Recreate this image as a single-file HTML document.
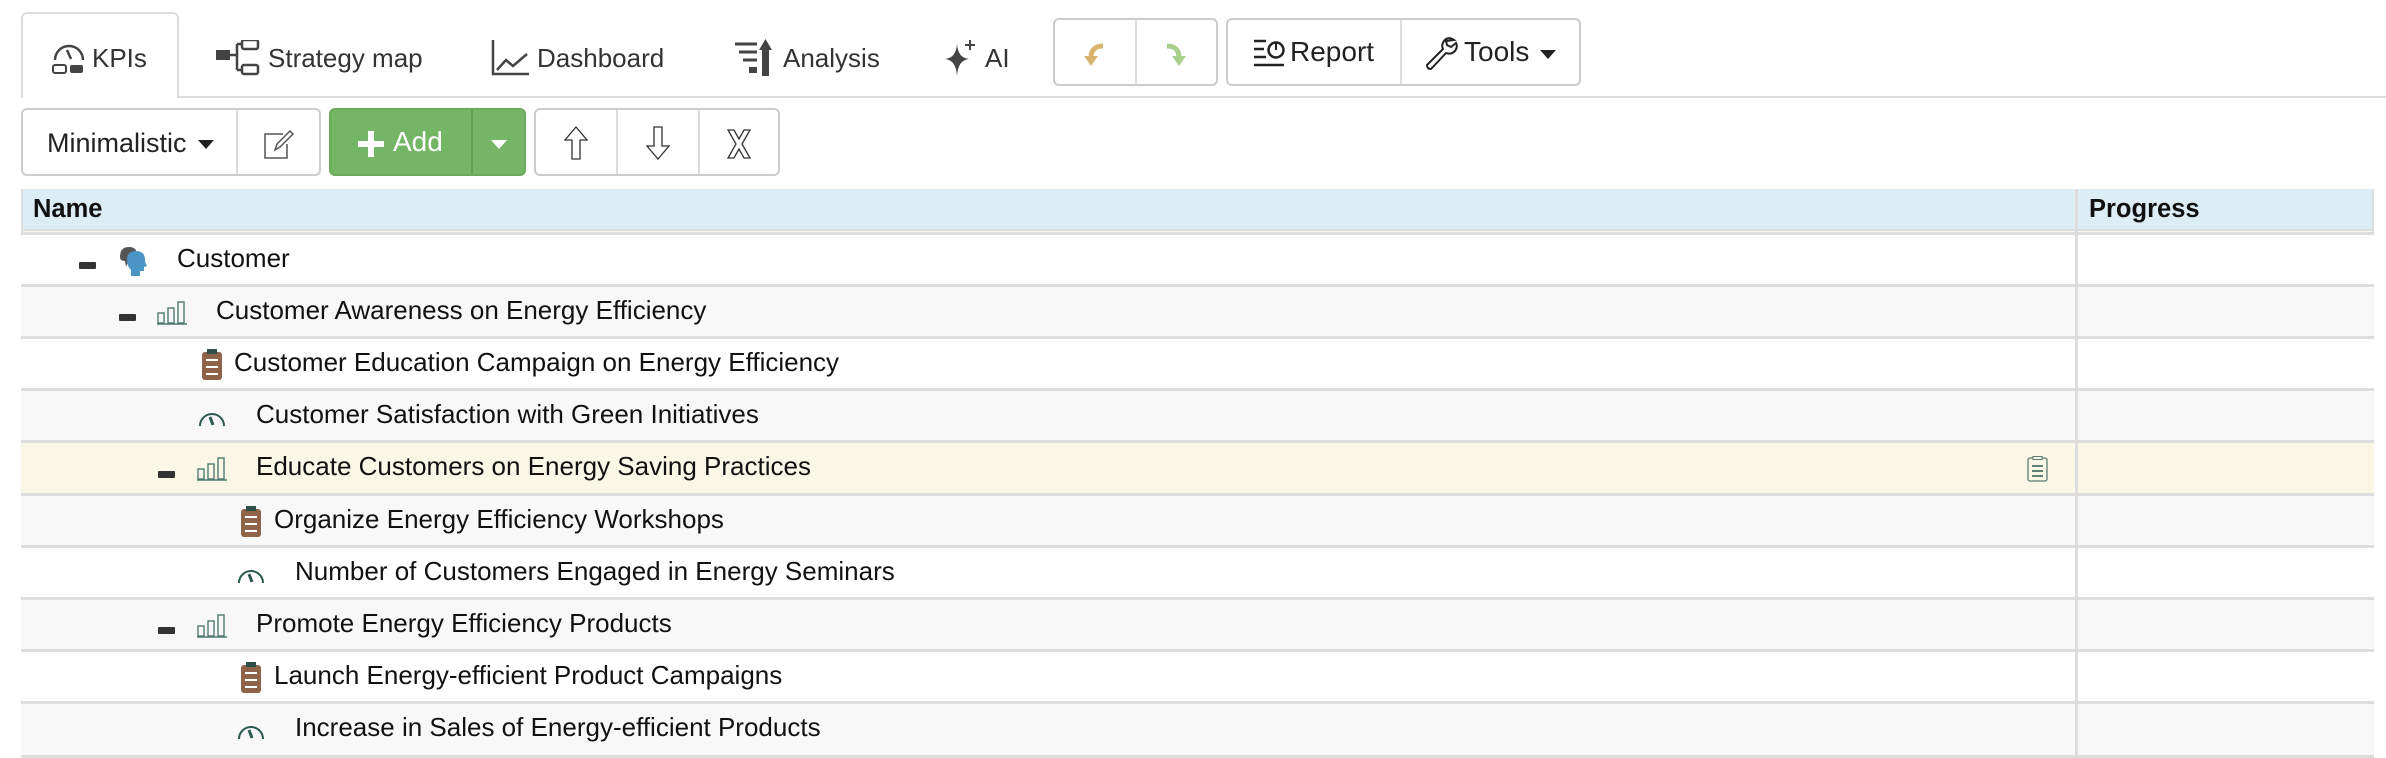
<!DOCTYPE html>
<html><head><meta charset="utf-8"><style>
*{box-sizing:border-box;margin:0;padding:0}
body{width:2386px;height:758px;background:#fff;font-family:"Liberation Sans",Arial,sans-serif;color:#111;position:relative;overflow:hidden}
.a{position:absolute}
.tab{position:absolute;top:12px;height:86px;font-size:26px;color:#333;display:flex;align-items:center;padding-top:6px}
.tab svg{margin-right:4px}
.btn{position:absolute;border:2px solid #ccc;border-radius:6px;background:#fff}
.div{position:absolute;top:0;bottom:0;width:2px;background:#ddd}
.row{position:absolute;left:21px;width:2353px;border-top:3px solid #ddd;font-size:26px}
.row span.t{position:absolute;top:50%;transform:translateY(-58%)}
.ic{position:absolute;top:50%;transform:translateY(-50%)}
.minus{position:absolute;width:17px;height:7px;background:#333;border-radius:1px}
</style></head><body>
<div class="a" style="left:21px;top:96px;width:2365px;height:2px;background:#ddd"></div>
<div class="a" style="left:21px;top:12px;width:158px;height:86px;border:2px solid #ddd;border-bottom:none;border-radius:6px 6px 0 0;background:#fff"></div>
<div class="tab" style="left:50px">
<svg width="38" height="36" viewBox="0 0 38 36"><path d="M5 20 A14 14 0 1 1 33 20" fill="none" stroke="#444" stroke-width="2.5"/><path d="M17 10 L21 19" stroke="#444" stroke-width="2.5"/><rect x="3" y="25" width="13" height="8" rx="2" fill="none" stroke="#444" stroke-width="2"/><rect x="20" y="25" width="13" height="8" rx="2" fill="#444"/></svg>KPIs</div>
<div class="tab" style="left:214px">
<svg width="50" height="36" viewBox="0 0 50 36"><rect x="2" y="10" width="14" height="10" fill="#444"/><path d="M16 15 H23 M23 4 V30 M23 4 H28 M23 30 H28" stroke="#444" stroke-width="2.5" fill="none"/><rect x="28" y="0" width="16" height="9" rx="2" fill="none" stroke="#444" stroke-width="2.5"/><rect x="28" y="25" width="16" height="9" rx="2" fill="none" stroke="#444" stroke-width="2.5"/></svg>Strategy map</div>
<div class="tab" style="left:491px">
<svg width="42" height="40" viewBox="0 0 42 40"><path d="M2 2 V36 H38" stroke="#444" stroke-width="2.5" fill="none"/><path d="M6 32 L15 22 L22 28 L36 16" stroke="#444" stroke-width="2.5" fill="none"/></svg>Dashboard</div>
<div class="tab" style="left:733px">
<svg width="46" height="40" viewBox="0 0 46 40"><path d="M2 6 H24 M6 14 H24 M10 22 H24" stroke="#444" stroke-width="3"/><rect x="16" y="29" width="8" height="6" fill="#444"/><rect x="29" y="10" width="7" height="28" fill="#444"/><path d="M26 12 L32.5 1 L39 12Z" fill="#444"/></svg>Analysis</div>
<div class="tab" style="left:943px">
<svg width="38" height="40" viewBox="0 0 38 40"><path d="M14 6 Q15 20 26 21 Q15 22 14 38 Q13 22 2 21 Q13 20 14 6Z" fill="#444"/><path d="M27 2 V12 M22 7 H32" stroke="#444" stroke-width="2"/></svg>AI</div>
<div class="btn" style="left:1053px;top:18px;width:165px;height:68px"><div class="div" style="left:80px"></div>
<svg class="a" style="left:28px;top:20px" width="26" height="28" viewBox="0 0 26 28"><path d="M20 6 Q8 6 8 18" fill="none" stroke="#d9b46e" stroke-width="5"/><path d="M1 16 L15 16 L8 26Z" fill="#d9b46e"/></svg>
<svg class="a" style="left:108px;top:20px" width="26" height="28" viewBox="0 0 26 28"><path d="M4 6 Q16 6 16 18" fill="none" stroke="#a9cf8d" stroke-width="5"/><path d="M9 16 L23 16 L16 26Z" fill="#a9cf8d"/></svg>
</div>
<div class="btn" style="left:1226px;top:18px;width:355px;height:68px;font-size:28px;color:#222"><div class="div" style="left:172px"></div>
<svg class="a" style="left:24px;top:18px" width="34" height="30" viewBox="0 0 34 30"><path d="M2 3 H14 M2 11 H12 M2 19 H14 M2 27 H32" stroke="#222" stroke-width="2.5"/><circle cx="24" cy="12" r="7.5" fill="none" stroke="#222" stroke-width="2.5"/><path d="M24 12 V4" stroke="#222" stroke-width="2"/></svg>
<span class="a" style="left:62px;top:16px">Report</span>
<svg class="a" style="left:196px;top:16px" width="34" height="36" viewBox="0 0 34 36"><path d="M30 4 Q24 0 20 5 Q17 9 19 13 L3 29 Q3 33 7 33 L22 17 Q27 19 31 15 Q34 11 32 7 L27 11 L23 9 L22 5Z" fill="none" stroke="#222" stroke-width="2"/></svg>
<span class="a" style="left:236px;top:16px">Tools</span>
<svg class="a" style="left:312px;top:30px" width="16" height="10"><path d="M0 0H16L8 9Z" fill="#222"/></svg>
</div>
<div class="btn" style="left:21px;top:108px;width:300px;height:68px;font-size:27px;color:#222"><div class="div" style="left:213px"></div>
<span class="a" style="left:24px;top:18px">Minimalistic</span>
<svg class="a" style="left:175px;top:30px" width="16" height="10"><path d="M0 0H16L8 9Z" fill="#222"/></svg>
<svg class="a" style="left:240px;top:20px" width="32" height="30" viewBox="0 0 32 30"><path d="M20 4 H2 V28 H24 V14" fill="none" stroke="#555" stroke-width="1.5"/><path d="M12 20 L14 14 L27 1 L30 4 L17 17Z" fill="none" stroke="#555" stroke-width="1.5"/></svg>
</div>
<div class="a" style="left:329px;top:108px;width:197px;height:68px;background:#75b666;border:2px solid #6aaa5b;border-radius:6px;color:#fff;font-size:28px">
<div class="a" style="left:140px;top:0;bottom:0;width:2px;background:#66a058"></div>
<svg class="a" style="left:25px;top:19px" width="30" height="30"><path d="M15 2V28M2 15H28" stroke="#fff" stroke-width="6"/></svg>
<span class="a" style="left:62px;top:16px">Add</span>
<svg class="a" style="left:160px;top:30px" width="16" height="10"><path d="M0 0H16L8 9Z" fill="#fff"/></svg>
</div>
<div class="btn" style="left:534px;top:108px;width:246px;height:68px"><div class="div" style="left:80px"></div><div class="div" style="left:162px"></div>
<svg class="a" style="left:28px;top:16px" width="24" height="34" viewBox="0 0 24 34"><path d="M12 1 L23 14 H16 V33 H8 V14 H1Z" fill="none" stroke="#333" stroke-width="1.3"/></svg>
<svg class="a" style="left:110px;top:16px" width="24" height="34" viewBox="0 0 24 34"><path d="M12 33 L23 20 H16 V1 H8 V20 H1Z" fill="none" stroke="#333" stroke-width="1.3"/></svg>
<svg class="a" style="left:190px;top:18px" width="26" height="32" viewBox="0 0 26 32"><path d="M2 2 H8 L13 11 L18 2 H24 L16 16 L24 30 H18 L13 21 L8 30 H2 L10 16Z" fill="none" stroke="#333" stroke-width="1.3"/></svg>
</div>
<div class="a" style="left:21px;top:189px;width:2353px;height:40px;background:#ddedf5;font-weight:bold;font-size:25.5px">
<span class="a" style="left:12px;top:6px">Name</span><span class="a" style="left:2068px;top:6px">Progress</span>
<div class="a" style="left:2054px;top:0;bottom:0;width:3px;background:#ddd"></div></div>
<div class="a" style="left:21px;top:229px;width:2353px;height:5px;background:#f5f5f5;border-top:2px solid #ddd"></div>
<div class="a" style="left:21px;top:189px;width:2px;height:569px;background:#ddd"></div>
<div class="a" style="left:2372px;top:189px;width:2px;height:569px;background:#ddd"></div>

<div class="row" style="top:232px;height:54px;background:#fff"><div class="minus" style="left:58px;top:27px"></div>
<svg class="ic" style="left:96px" width="34" height="32" viewBox="0 0 34 32"><path d="M3 12 Q3 2 12 2 Q20 2 20 10 L13 12 L9 22 L8 16 Q3 16 3 12Z" fill="#555"/><path d="M10 15 Q10 6 19 6 Q28 6 28 15 Q28 18 30 21 L27 22 L27 26 L23 26 L23 31 L14 31 L14 25 Q10 21 10 15Z" fill="#4a95c6"/></svg>
<span class="t" style="left:156px">Customer</span></div>
<div class="row" style="top:284px;height:54px;background:#f8f8f8"><div class="minus" style="left:98px;top:27px"></div>
<svg class="ic" style="left:136px" width="32" height="24" viewBox="0 0 32 24"><rect x="1" y="12" width="6" height="10" fill="none" stroke="#4f7a70" stroke-width="1.4"/><rect x="11" y="7" width="6" height="15" fill="none" stroke="#4f7a70" stroke-width="1.4"/><rect x="21" y="1" width="6" height="21" fill="none" stroke="#4f7a70" stroke-width="1.4"/><path d="M0 23H30" stroke="#4f7a70" stroke-width="1.4"/></svg>
<span class="t" style="left:195px">Customer Awareness on Energy Efficiency</span></div>
<div class="row" style="top:336px;height:54px;background:#fff">
<svg class="ic" style="left:180px" width="22" height="32" viewBox="0 0 22 32"><rect x="1" y="3" width="20" height="28" rx="3" fill="#8e6347"/><rect x="6" y="0" width="10" height="5" fill="#2d4f48"/><path d="M5 11H17M5 18H17M5 25H17" stroke="#fff" stroke-width="2"/></svg>
<span class="t" style="left:213px">Customer Education Campaign on Energy Efficiency</span></div>
<div class="row" style="top:388px;height:54px;background:#f8f8f8">
<svg class="ic" style="left:176px" width="30" height="24" viewBox="0 0 30 24"><path d="M3 21 A12 12 0 1 1 27 21" fill="none" stroke="#2c5a50" stroke-width="2"/><path d="M13 12 L16 20" stroke="#2c5a50" stroke-width="3"/></svg>
<span class="t" style="left:235px">Customer Satisfaction with Green Initiatives</span></div>
<div class="row" style="top:440px;height:55px;background:#faf7e6"><div class="minus" style="left:137px;top:28px"></div>
<svg class="ic" style="left:176px" width="32" height="24" viewBox="0 0 32 24"><rect x="1" y="12" width="6" height="10" fill="none" stroke="#4f7a70" stroke-width="1.4"/><rect x="11" y="7" width="6" height="15" fill="none" stroke="#4f7a70" stroke-width="1.4"/><rect x="21" y="1" width="6" height="21" fill="none" stroke="#4f7a70" stroke-width="1.4"/><path d="M0 23H30" stroke="#4f7a70" stroke-width="1.4"/></svg>
<span class="t" style="left:235px">Educate Customers on Energy Saving Practices</span>
<svg class="ic" style="left:2006px" width="22" height="26" viewBox="0 0 22 26"><rect x="1" y="2" width="19" height="23" rx="2" fill="none" stroke="#5a7a70" stroke-width="1.3"/><rect x="6" y="0.5" width="9" height="3" fill="#faf7e6" stroke="#5a7a70" stroke-width="1"/><path d="M5 10H16M5 15H16M5 20H16" stroke="#2c5a50" stroke-width="1.5"/></svg></div>
<div class="row" style="top:493px;height:54px;background:#f8f8f8">
<svg class="ic" style="left:219px" width="22" height="32" viewBox="0 0 22 32"><rect x="1" y="3" width="20" height="28" rx="3" fill="#8e6347"/><rect x="6" y="0" width="10" height="5" fill="#2d4f48"/><path d="M5 11H17M5 18H17M5 25H17" stroke="#fff" stroke-width="2"/></svg>
<span class="t" style="left:253px">Organize Energy Efficiency Workshops</span></div>
<div class="row" style="top:545px;height:54px;background:#fff">
<svg class="ic" style="left:215px" width="30" height="24" viewBox="0 0 30 24"><path d="M3 21 A12 12 0 1 1 27 21" fill="none" stroke="#2c5a50" stroke-width="2"/><path d="M13 12 L16 20" stroke="#2c5a50" stroke-width="3"/></svg>
<span class="t" style="left:274px">Number of Customers Engaged in Energy Seminars</span></div>
<div class="row" style="top:597px;height:54px;background:#f8f8f8"><div class="minus" style="left:137px;top:27px"></div>
<svg class="ic" style="left:176px" width="32" height="24" viewBox="0 0 32 24"><rect x="1" y="12" width="6" height="10" fill="none" stroke="#4f7a70" stroke-width="1.4"/><rect x="11" y="7" width="6" height="15" fill="none" stroke="#4f7a70" stroke-width="1.4"/><rect x="21" y="1" width="6" height="21" fill="none" stroke="#4f7a70" stroke-width="1.4"/><path d="M0 23H30" stroke="#4f7a70" stroke-width="1.4"/></svg>
<span class="t" style="left:235px">Promote Energy Efficiency Products</span></div>
<div class="row" style="top:649px;height:54px;background:#fff">
<svg class="ic" style="left:219px" width="22" height="32" viewBox="0 0 22 32"><rect x="1" y="3" width="20" height="28" rx="3" fill="#8e6347"/><rect x="6" y="0" width="10" height="5" fill="#2d4f48"/><path d="M5 11H17M5 18H17M5 25H17" stroke="#fff" stroke-width="2"/></svg>
<span class="t" style="left:253px">Launch Energy-efficient Product Campaigns</span></div>
<div class="row" style="top:701px;height:57px;background:#f8f8f8;border-bottom:3px solid #ddd">
<svg class="ic" style="left:215px" width="30" height="24" viewBox="0 0 30 24"><path d="M3 21 A12 12 0 1 1 27 21" fill="none" stroke="#2c5a50" stroke-width="2"/><path d="M13 12 L16 20" stroke="#2c5a50" stroke-width="3"/></svg>
<span class="t" style="left:274px">Increase in Sales of Energy-efficient Products</span></div>
<div class="a" style="left:2075px;top:229px;width:3px;height:529px;background:#ddd"></div>
</body></html>
